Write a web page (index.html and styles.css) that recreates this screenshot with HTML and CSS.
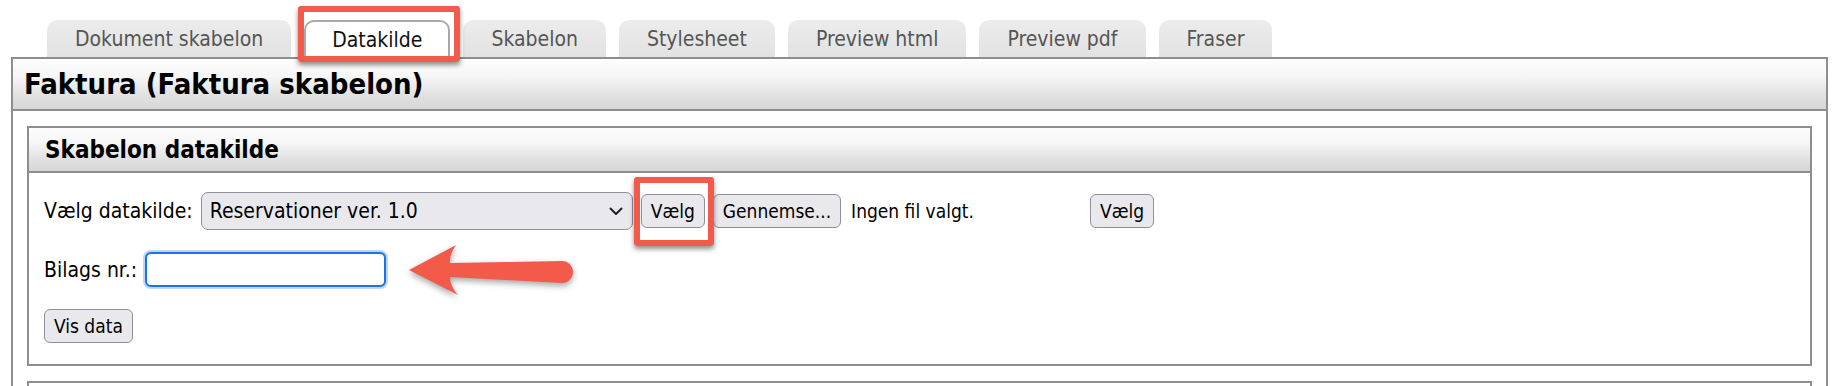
FILE: index.html
```html
<!DOCTYPE html>
<html lang="da">
<head>
<meta charset="utf-8">
<title>Faktura skabelon</title>
<link rel="stylesheet" href="styles.css">
</head>
<body>
<div class="page">
  <ul class="tabs">
    <li class="tab">Dokument skabelon</li>
    <li class="tab active">Datakilde</li>
    <li class="tab">Skabelon</li>
    <li class="tab">Stylesheet</li>
    <li class="tab">Preview html</li>
    <li class="tab">Preview pdf</li>
    <li class="tab">Fraser</li>
  </ul>
  <div class="panel">
    <div class="panel-head"><h1>Faktura (Faktura skabelon)</h1></div>
    <div class="panel-body">
      <div class="box">
        <div class="box-head"><h2>Skabelon datakilde</h2></div>
        <div class="box-body">
          <div class="row">
            <label class="lbl">Vælg datakilde:</label>
            <div class="select"><span>Reservationer ver. 1.0</span>
              <svg class="chev" width="14" height="9" viewBox="0 0 14 9"><path d="M1.5 1.5 L7 7 L12.5 1.5" fill="none" stroke="#222" stroke-width="2" stroke-linecap="round" stroke-linejoin="round"/></svg>
            </div>
            <button class="btn">Vælg</button>
            <button class="btn btn-file">Gennemse...</button>
            <span class="file-name">Ingen fil valgt.</span>
            <button class="btn">Vælg</button>
          </div>
          <div class="row">
            <label class="lbl">Bilags nr.:</label>
            <div class="input"></div>
          </div>
          <div class="row">
            <button class="btn">Vis data</button>
          </div>
        </div>
      </div>
      <div class="box box-next"></div>
    </div>
  </div>
</div>
<div class="mark mark-tab"></div>
<div class="mark mark-btn"></div>
<svg class="arrow" width="180" height="70" viewBox="0 0 180 70">
  <path d="M9 32 L56 7 Q49 17 50 25 L162 23 A11 11 0 0 1 162 45 L50 39 Q50 48 58 57 Z" fill="#f35a4a"/>
</svg>
</body>
</html>
```
FILE: styles.css
```css
html, body {
  margin: 0;
  padding: 0;
  background: #ffffff;
}
body {
  height: 386px;
  overflow: hidden;
  position: relative;
  font-family: "DejaVu Sans Condensed", "DejaVu Sans", sans-serif;
  font-stretch: condensed;
  color: #111;
}
.page {
  padding: 0 14px 0 11px;
}
.tabs {
  display: flex;
  gap: 13px;
  margin: 0;
  padding: 20px 0 0 36px;
  list-style: none;
}
.tab {
  height: 37px;
  box-sizing: border-box;
  padding: 0 28px;
  display: flex;
  align-items: center;
  background: linear-gradient(#ececec, #e2e2e2);
  border-radius: 10px 10px 0 0;
  color: #555;
  font-size: 21px;
}
.tab.active {
  background: #ffffff;
  color: #111;
  border: 2px solid #a9a9a9;
  border-bottom: none;
  padding: 0 26px;
}
.panel {
  border: 2px solid #8e8e8e;
  border-bottom: none;
  height: 329px;
  box-sizing: border-box;
  overflow: hidden;
}
.panel-head {
  height: 50px;
  border-bottom: 2px solid #8e8e8e;
  padding-left: 11px;
  display: flex;
  align-items: center;
  background: linear-gradient(#fdfdfd 0%, #f6f6f6 35%, #e0e0e0 75%, #d7d7d9 100%);
}
h1 {
  margin: 0;
  font-size: 29px;
  font-weight: bold;
  color: #000;
}
.panel-body {
  padding: 15px 14px 0 14px;
}
.box {
  border: 2px solid #8e8e8e;
}
.box-head {
  height: 43px;
  border-bottom: 2px solid #8e8e8e;
  padding-left: 16px;
  display: flex;
  align-items: center;
  background: linear-gradient(#fdfdfd 0%, #f6f6f6 35%, #e0e0e0 75%, #d7d7d9 100%);
}
h2 {
  margin: 0;
  font-size: 24px;
  font-weight: bold;
  color: #000;
}
.box-body {
  padding: 19px 15px 21px 15px;
  display: flex;
  flex-direction: column;
  align-items: flex-start;
  gap: 22px;
}
.row {
  display: flex;
  align-items: center;
  gap: 8px;
}
.lbl {
  font-size: 21px;
  color: #000;
}
.select {
  width: 432px;
  height: 38px;
  box-sizing: border-box;
  border: 1px solid #8f8f9d;
  border-radius: 7px;
  background: #e9e9ed;
  display: flex;
  align-items: center;
  justify-content: space-between;
  padding: 0 9px 0 8px;
  font-size: 21px;
  color: #000;
}
.btn {
  height: 34px;
  box-sizing: border-box;
  padding: 0 9px;
  border: 1px solid #8f8f9d;
  border-radius: 6px;
  background: #e9e9ed;
  font-family: "DejaVu Sans Condensed", "DejaVu Sans", sans-serif;
  font-stretch: condensed;
  font-size: 19px;
  color: #000;
}
.file-name {
  font-size: 19px;
  color: #000;
  width: 231px;
  margin-left: 2px;
}
.input {
  width: 241px;
  height: 35px;
  box-sizing: border-box;
  border: 2px solid #1f6fe5;
  border-radius: 6px;
  background: #fff;
  box-shadow: 0 0 0 2px #b9d6fb;
}
.box-next {
  margin-top: 15px;
  height: 10px;
  border-bottom: none;
}
.mark {
  position: absolute;
  box-sizing: border-box;
  border: 6px solid #f25b4b;
  border-radius: 3px;
  box-shadow: 0 3px 5px rgba(0, 0, 0, 0.45);
}
.mark-tab {
  left: 298px;
  top: 6px;
  width: 162px;
  height: 56px;
}
.mark-btn {
  left: 634px;
  top: 177px;
  width: 80px;
  height: 69px;
}
.arrow {
  position: absolute;
  left: 400px;
  top: 238px;
  filter: drop-shadow(0 3px 3px rgba(0, 0, 0, 0.35));
}
```
